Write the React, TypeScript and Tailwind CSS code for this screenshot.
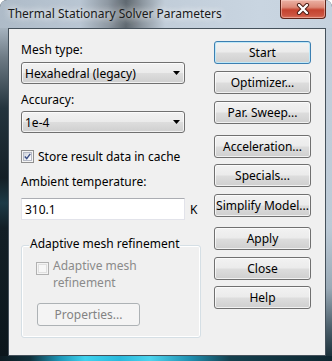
import React from "react";

const btnBase =
  "w-[97px] h-[23px] rounded-[3px] border flex items-center justify-center text-black leading-[15px]";
const btnGrad =
  "bg-[linear-gradient(to_bottom,#f2f2f2_0%,#ebebeb_48%,#dddddd_52%,#cfcfcf_100%)]";

function WinButton({ label, className = "" }: { label: string; className?: string }) {
  return (
    <div
      className={`${btnBase} ${btnGrad} border-[#707070] shadow-[inset_0_0_0_1px_rgba(255,255,255,0.7)] ${className}`}
    >
      {label}
    </div>
  );
}

function Arrow() {
  return (
    <svg width="7" height="4" viewBox="0 0 7 4">
      <path d="M0 0 H7 L3.5 4 Z" fill="#000" />
    </svg>
  );
}

function Combo({ value }: { value: string }) {
  return (
    <div className="w-[164px] h-[22px] rounded-[3px] border border-[#707070] bg-[linear-gradient(to_bottom,#f2f2f2_0%,#ebebeb_48%,#dddddd_52%,#cfcfcf_100%)] shadow-[inset_0_0_0_1px_rgba(255,255,255,0.7)] flex items-center justify-between pl-[3px] pr-[4px]">
      <span>{value}</span>
      <Arrow />
    </div>
  );
}

export default function App() {
  return (
    <div className="w-[332px] h-[361px] flex flex-col overflow-hidden rounded-t-[7px] font-['Noto_Sans',sans-serif] text-[12px] leading-[15px] text-black bg-[#1c2e38]">
      {/* Title bar */}
      <div className="h-[28px] flex items-start bg-[linear-gradient(to_right,#aebbc8_0px,#b9c6d3_80px,#8e98a2_108px,#5f6870_126px,#8c969f_142px,#c1cdd9_165px,#c9d5e1_260px,#c6d2de_332px)]">
        <span className="mt-[6px] ml-[8px] text-[#1a1a1a] [text-shadow:0_0_6px_rgba(255,255,255,0.9),0_0_10px_rgba(255,255,255,0.7)]">
          Thermal Stationary Solver Parameters
        </span>
        <div className="ml-auto mr-[6px] w-[46px] h-[19px] rounded-b-[4px] border border-t-0 border-[#5e2419] bg-[linear-gradient(to_bottom,#ebb1a4_0%,#dd8a78_40%,#c4432f_55%,#cc5541_85%,#d9735e_100%)] shadow-[inset_0_0_0_1px_rgba(255,220,210,0.45)] flex items-center justify-center">
          <svg width="14" height="12" viewBox="0 0 14 12">
            <path d="M3 2 L11 10 M11 2 L3 10" stroke="#4a1a12" strokeWidth="4.2" strokeLinecap="round" />
            <path d="M3 2 L11 10 M11 2 L3 10" stroke="#ffffff" strokeWidth="2.4" strokeLinecap="round" />
          </svg>
        </div>
      </div>

      {/* Middle */}
      <div className="flex h-[328px]">
        <div className="w-[8px] bg-[linear-gradient(to_bottom,#a6b3bf_0px,#6d7a84_30px,#24343e_80px,#141f26_150px,#1d3a46_175px,#131f26_200px,#0b161c_328px)]" />
        <div className="w-[318px] border border-[#45515b] bg-[#f0f0f0] flex pl-[12px]">
          {/* Left column */}
          <div className="w-[180px] flex flex-col pt-[13px]">
            <div className="h-[15px]">Mesh type:</div>
            <div className="mt-[5px]">
              <Combo value="Hexahedral (legacy)" />
            </div>
            <div className="mt-[8px] h-[15px]">Accuracy:</div>
            <div className="mt-[4px]">
              <Combo value="1e-4" />
            </div>
            <div className="mt-[16px] h-[15px] flex items-center gap-[4px]">
              <div className="w-[13px] h-[13px] border border-[#8f8f8f] bg-[#f4f4f4] p-[1px]">
                <div className="w-full h-full border border-[#b5b9c5] bg-[linear-gradient(135deg,#cfd3dc_0%,#eef0f4_60%,#ffffff_100%)] flex items-center justify-center">
                  <svg width="9" height="9" viewBox="0 0 9 9">
                    <path d="M1 4.5 L3.5 7.2 L8 1.2" stroke="#3b4f85" strokeWidth="1.8" fill="none" />
                  </svg>
                </div>
              </div>
              <span>Store result data in cache</span>
            </div>
            <div className="mt-[10px] h-[15px]">Ambient temperature:</div>
            <div className="mt-[9px] flex items-center">
              <div className="w-[164px] h-[22px] border border-[#e2e3ea] border-t-[#abadb3] bg-white flex items-center pl-[3px]">
                310.1
              </div>
              <span className="ml-[5px]">K</span>
            </div>
            {/* Group box */}
            <div className="mt-[25px] relative w-[180px] h-[93px] rounded-[3px] border border-[#d5dfe5] shadow-[inset_0_0_0_1px_#ffffff] flex flex-col pl-[14px]">
              <span className="absolute left-[7px] top-[-10px] px-[1px] bg-[#f0f0f0] h-[15px]">
                Adaptive mesh refinement
              </span>
              <div className="mt-[12px] flex items-start gap-[4px] text-[#8a8a8a] leading-[16.5px]">
                <div className="mt-[4px] w-[13px] h-[13px] border border-[#b1b1b1] bg-[#f4f4f4] p-[1px]">
                  <div className="w-full h-full border border-[#e0e0e0] bg-[#f7f7f7]" />
                </div>
                <div className="flex flex-col">
                  <span>Adaptive mesh</span>
                  <span>refinement</span>
                </div>
              </div>
              <div className="mt-[12px] ml-[1px] w-[103px] h-[23px] rounded-[3px] border border-[#adb2b5] bg-[#f4f4f4] flex items-center justify-center text-[#838383]">
                Properties...
              </div>
            </div>
          </div>

          {/* Right column */}
          <div className="ml-[13px] flex flex-col pt-[12px]">
            <div
              className={`${btnBase} ${btnGrad} border-[#3c7fb1] shadow-[inset_0_0_0_1px_#bfe8f8]`}
            >
              Start
            </div>
            <WinButton label="Optimizer..." className="mt-[7px]" />
            <WinButton label="Par. Sweep..." className="mt-[7px]" />
            <WinButton label="Acceleration..." className="mt-[11px]" />
            <WinButton label="Specials..." className="mt-[6px]" />
            <WinButton label="Simplify Model..." className="mt-[7px]" />
            <WinButton label="Apply" className="mt-[10px]" />
            <WinButton label="Close" className="mt-[7px]" />
            <WinButton label="Help" className="mt-[6px]" />
          </div>
        </div>
        <div className="w-[6px] bg-[linear-gradient(to_bottom,#c4d0dc_0px,#bccad6_200px,#9aaab6_260px,#4b5e6a_300px,#1c313b_328px)]" />
      </div>

      {/* Bottom frame */}
      <div className="h-[5px] bg-[linear-gradient(to_right,#0d1b22_0px,#10303b_30px,#1d97b8_60px,#3fd2ee_85px,#29b9dc_120px,#4cd4ee_150px,#1f8fb0_190px,#14404e_230px,#0f2630_332px)]" />
    </div>
  );
}
